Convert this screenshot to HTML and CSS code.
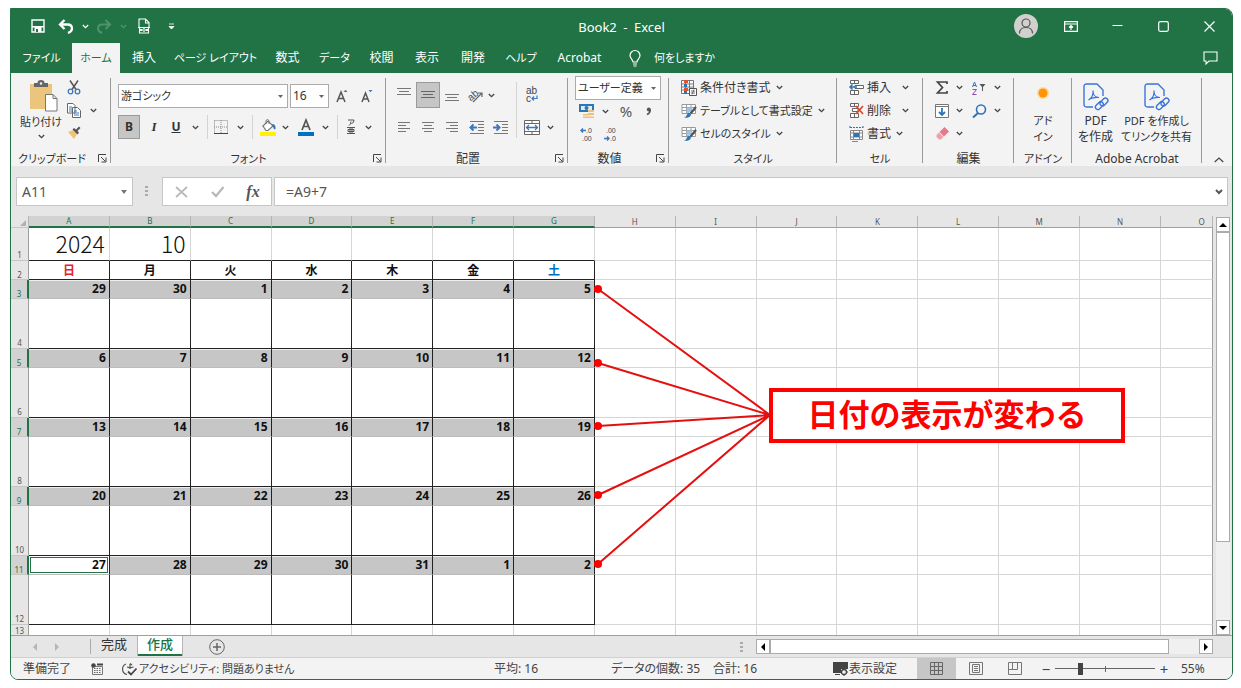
FILE: index.html
```html
<!DOCTYPE html>
<html lang="ja">
<head>
<meta charset="utf-8">
<title>Book2 - Excel</title>
<link rel="stylesheet" href="styles.css">
</head>
<body>
<svg class="defs" aria-hidden="true">
  <symbol id="chev" viewBox="0 0 7 5"><path d="M.8 1l2.7 2.7L6.2 1" fill="none" stroke="currentColor" stroke-width="1.3"/></symbol>
  <symbol id="launch" viewBox="0 0 9 9"><path d="M.5 8V.5H8M3 3l4.5 4.5M8 3.5V8H3.5" fill="none" stroke="#444"/></symbol>
  <symbol id="pdf" viewBox="0 0 26 28"><g fill="none" stroke="#3b74d8" stroke-width="1.4"><path d="M10 24H3.500Q1 24 1 21.500V3.500Q1 1 3.500 1H14L20 7V13"/><path d="M5.500 17c3.500-2 5-5 4.500-9.500M10 8c0 4.500 3 6.500 6 6.500M5.500 17c2-2 7-3 10.500-2.500" stroke-width="1.200"/><rect x="12" y="20.500" width="9" height="5" rx="2.500" transform="rotate(-45 16 23)"/><rect x="16.500" y="16.500" width="9" height="5" rx="2.500" transform="rotate(-45 21 19)"/></g></symbol>
  <symbol id="tblbrush" viewBox="0 0 16 16"><path d="M1 1.500h13.500v9H1zM1 4.500h13.500M1 7.500h13.500M5.500 1.500v9M10 1.500v9" fill="#fff" stroke="#999"/><path d="M5.500 4.500H12L8 10H5.500z" fill="#9dc3e6"/><path d="M15 4L9.500 10.500" stroke="#555" stroke-width="2.200"/><path d="M3 14.500c3 0 2-4 5-4.500 2 0 2.500 2 1 3.500-1.500 1.300-4 1.500-6 1z" fill="#2e75b6"/></symbol>
</svg>
<div class="window">
  <header class="titlebar">
    <div class="quick">
      <button aria-label="上書き保存"><svg width="14" height="14" viewBox="0 0 14 14"><path d="M1 1h12v12H1z" fill="none" stroke="#fff" stroke-width="1.400"/><path d="M1 7h12v1.500H1zM3.500 8.500h7V13h-7z" fill="#fff"/><path d="M5 10h2v3H5z" fill="#217346"/></svg></button>
      <button aria-label="元に戻す"><svg width="16" height="15" viewBox="0 0 16 15"><path d="M2 5.500h7.500q4.500 0 4.500 4 0 3-4 4.500M6.500 1L2 5.500 6.500 10" fill="none" stroke="#fff" stroke-width="2.300"/></svg></button>
      <button aria-label="元に戻す履歴"><svg width="7" height="5"><use href="#chev"/></svg></button>
      <button class="dim" aria-label="やり直し"><svg width="16" height="15" viewBox="0 0 16 15"><path d="M14 5.500H6.500q-4.500 0-4.500 4 0 3 4 4.500M9.500 1L14 5.500 9.500 10" fill="none" stroke="currentColor" stroke-width="2"/></svg></button>
      <button class="dim" aria-label="やり直し履歴"><svg width="7" height="5"><use href="#chev"/></svg></button>
      <button aria-label="印刷"><svg width="14" height="16" viewBox="0 0 14 16"><path d="M2 9V1h6.500L12 4.500V9M8.500 1v4H12M1 9.500h12M2.500 10v5h9v-5" fill="none" stroke="#fff" stroke-width="1.100"/><path d="M3 11h2v2H3zM9 11h2v2H9z" fill="#fff"/><circle cx="7" cy="12" r="1.300" fill="none" stroke="#fff"/></svg></button>
      <button aria-label="カスタマイズ"><svg width="5" height="7" viewBox="0 0 5 7"><path d="M0 1h5M0 3.500h5L2.500 6z" stroke="#fff" fill="#fff" stroke-width=".8"/></svg></button>
    </div>
    <h1 class="title">Book2&ensp;-&ensp;Excel</h1>
    <div class="winbtns">
      <button class="avatar" aria-label="アカウント"><svg width="24" height="24" viewBox="0 0 24 24"><circle cx="12" cy="12" r="12" fill="#d2d0ce"/><circle cx="12" cy="9" r="4" fill="none" stroke="#555" stroke-width="1.200"/><path d="M5.500 19.500q0-6 6.500-6t6.500 6" fill="none" stroke="#555" stroke-width="1.200"/></svg></button>
      <button aria-label="リボンの表示オプション"><svg width="14" height="11" viewBox="0 0 14 11"><path d="M.6.600h12.800v9.800H.6zM.6 3h12.800M7 9V4.500M5 6.500l2-2 2 2" fill="none" stroke="#fff" stroke-width="1.200"/></svg></button>
      <button aria-label="最小化"><svg width="11" height="11" viewBox="0 0 11 11"><path d="M.5 4.500h10" stroke="#fff" stroke-width="1.200"/></svg></button>
      <button aria-label="最大化"><svg width="11" height="11" viewBox="0 0 11 11"><rect x=".7" y=".7" width="9.600" height="9.600" rx="1.500" fill="none" stroke="#fff" stroke-width="1.200"/></svg></button>
      <button aria-label="閉じる"><svg width="11" height="11" viewBox="0 0 11 11"><path d="M.5.500l10 10M10.500.500l-10 10" stroke="#fff" stroke-width="1.200"/></svg></button>
    </div>
  </header>
  <nav class="tabs">
    <button class="kana">ファイル</button><button class="active kana">ホーム</button><button>挿入</button><button class="kana">ページ レイアウト</button><button>数式</button><button class="kana">データ</button><button>校閲</button><button>表示</button><button>開発</button><button class="kana">ヘルプ</button><button>Acrobat</button>
    <button class="tell kana"><svg width="12" height="17" viewBox="0 0 12 17"><path d="M4 12c0-2.500-3-3.500-3-6.500a5 5 0 0 1 10 0c0 3-3 4-3 6.500zM4 14h4M4.500 16h3" fill="none" stroke="#fff" stroke-width="1.200"/></svg>何をしますか</button>
    <button class="comment" aria-label="コメント"><svg width="15" height="14" viewBox="0 0 15 14"><path d="M1 1h13v9H6l-3 3v-3H1z" fill="none" stroke="#fff" stroke-width="1.100"/></svg></button>
  </nav>
  <section class="ribbon">
    <div class="group g-clip">
      <div class="body">
        <button class="big"><svg width="34" height="32" viewBox="-6 0 34 32"><path d="M0 4h22v25H0z" fill="#ecc57c"/><path d="M4 7V3h3.500a3.500 3 0 0 1 7 0H18v4z" fill="#666"/><circle cx="11" cy="3.500" r="1.200" fill="#f3f3f3"/><path d="M15.500 14.500H23l4 4V31H15.500zM23 14.500v4h4" fill="#fff" stroke="#777"/></svg><span class="kana">貼り付け</span><svg width="7" height="5"><use href="#chev"/></svg></button>
        <div class="clipcol">
          <button aria-label="切り取り"><svg width="14" height="15" viewBox="0 0 14 15"><path d="M3 .5l6 9M11 .5l-6 9" stroke="#555" stroke-width="1.500"/><circle cx="3.500" cy="11.500" r="2.300" fill="none" stroke="#3b78bd" stroke-width="1.300"/><circle cx="10.500" cy="11.500" r="2.300" fill="none" stroke="#3b78bd" stroke-width="1.300"/></svg></button><span></span>
          <button aria-label="コピー"><svg width="14" height="15" viewBox="0 0 14 15"><path d="M.5.500H6L8 2.500V10H.5zM5.500 4.500h5l3 3v7h-8z" fill="#fff" stroke="#666"/><path d="M2 4h3M2 6h3M2 8h3M7 8h3M7 10h5M7 12h5" stroke="#3b78bd"/></svg></button><button aria-label="コピーのオプション"><svg width="7" height="5"><use href="#chev"/></svg></button>
          <button aria-label="書式のコピー"><svg width="14" height="13" viewBox="0 0 14 13"><path d="M1 6l5-2 4 4-3 5z" fill="#ecc57c"/><path d="M5.500 3.500l5 5 1.500-2-1.500-1.500L13.500 2 12 .5 9 3.500 7 2z" fill="#555"/></svg></button><span></span>
        </div>
      </div>
      <footer class="kana">クリップボード<button class="launch" aria-label="クリップボードの設定"><svg width="9" height="9"><use href="#launch"/></svg></button></footer>
    </div>
    <div class="group g-font">
      <div class="body col">
        <div class="fontrow1">
          <select class="kana" aria-label="フォント"><option>游ゴシック</option></select>
          <select aria-label="フォント サイズ"><option>16</option></select>
          <button aria-label="拡大"><svg width="14" height="15" viewBox="0 0 14 15"><path d="M1 13L5 3l4 10M2.500 9.500h5" fill="none" stroke="#555" stroke-width="1.500"/><path d="M7.500 3L9.500.800 11.500 3z" fill="#3b78bd"/></svg></button>
          <button aria-label="縮小"><svg width="14" height="15" viewBox="0 0 14 15"><path d="M1 13l3.500-9L8 13M2.500 10h4" fill="none" stroke="#555" stroke-width="1.500"/><path d="M7.500 1h4l-2 2.200z" fill="#3b78bd"/></svg></button>
        </div>
        <div class="fontrow2">
          <button class="on bold">B</button><button class="ital">I</button><button class="under">U</button><button aria-label="下線"><svg width="7" height="5"><use href="#chev"/></svg></button><i class="sep"></i>
          <button aria-label="罫線"><svg width="14" height="14" viewBox="0 0 14 14"><path d="M.5.500h13v13M.5.500v13M7 0v14M0 7h14" stroke="#888" stroke-dasharray="1 1" fill="none"/><path d="M0 13.500h14" stroke="#444"/></svg></button><button aria-label="罫線の種類"><svg width="7" height="5"><use href="#chev"/></svg></button><i class="sep"></i>
          <button aria-label="塗りつぶし"><svg width="17" height="17" viewBox="0 0 17 17"><path d="M3 7l5-5 5 5-5 4.500H6z" fill="#fff" stroke="#777" stroke-width="1.200"/><path d="M6 5V1.500Q7.500-.5 9 1.500V5" fill="none" stroke="#777"/><path d="M12 5q4 0 3.500 5-1.500 1-2-1z" fill="#2e75b6"/><path d="M0 13h16v4H0z" fill="#fff200"/></svg></button><button aria-label="塗りつぶしの色"><svg width="7" height="5"><use href="#chev"/></svg></button>
          <button aria-label="フォントの色"><svg width="16" height="17" viewBox="0 0 16 17"><path d="M4 11L8 1l4 10M5.500 7.500h5" fill="none" stroke="#555" stroke-width="1.700"/><path d="M0 13h16v4H0z" fill="#0070c0"/></svg></button><button aria-label="色の選択"><svg width="7" height="5"><use href="#chev"/></svg></button><i class="sep"></i>
          <button aria-label="ふりがなの表示"><svg width="10" height="16" viewBox="0 0 10 16"><path d="M2 1h6q0 3-2.500 3.500M5 2.500Q5 5.500 3 6.500M1 8.500h8M1 14.500h8M4 8.500v6M6 8.500v6M2 10.500h6v2H2z" fill="none" stroke="#555"/></svg></button><button aria-label="ふりがな"><svg width="7" height="5"><use href="#chev"/></svg></button>
        </div>
      </div>
      <footer class="kana">フォント<button class="launch" aria-label="フォントの設定"><svg width="9" height="9"><use href="#launch"/></svg></button></footer>
    </div>
    <div class="group g-align">
      <div class="body aligngrid">
        <button aria-label="上揃え"><svg width="14" height="14"><path d="M0 .5h14M2 3.500h10M0 6.500h14" stroke="#777"/></svg></button>
        <button class="on" aria-label="上下中央揃え"><svg width="14" height="14"><path d="M0 3.500h14M2 6.500h10M0 9.500h14" stroke="#666"/></svg></button>
        <button aria-label="下揃え"><svg width="14" height="14"><path d="M0 6.500h14M2 9.500h10M0 12.500h14" stroke="#777"/></svg></button>
        <button aria-label="方向"><svg width="16" height="16" viewBox="0 0 16 16"><text x="0" y="11" font-size="10" fill="#444" transform="rotate(-40 6 9)">ab</text><path d="M5 15L14 6M10 6h4v4" fill="none" stroke="#666" stroke-width="1.200"/></svg></button>
        <button class="left" aria-label="方向の選択"><svg width="7" height="5"><use href="#chev"/></svg></button>
        <i class="sep"></i>
        <button aria-label="折り返し"><svg width="14" height="18" viewBox="0 0 14 18"><text x="1" y="8" font-size="10" fill="#444">ab</text><text x="1" y="16" font-size="10" fill="#444">c</text><path d="M12 9.500v3H7M9 10.500l-2 2 2 2" fill="none" stroke="#3b78bd" stroke-width="1.200"/></svg></button><span></span>
        <button aria-label="左揃え"><svg width="12" height="12"><path d="M0 1.500h12M0 4.500h8M0 7.500h12M0 10.500h8" stroke="#777"/></svg></button>
        <button aria-label="中央揃え"><svg width="12" height="12"><path d="M0 1.500h12M2 4.500h8M0 7.500h12M2 10.500h8" stroke="#777"/></svg></button>
        <button aria-label="右揃え"><svg width="12" height="12"><path d="M0 1.500h12M4 4.500h8M0 7.500h12M4 10.500h8" stroke="#777"/></svg></button>
        <button aria-label="インデント解除"><svg width="15" height="13" viewBox="0 0 15 13"><path d="M1 .5h14M9 3.500h6M9 6.500h6M9 9.500h6M1 12.500h14" stroke="#777"/><path d="M8 6.500H1M4.500 3.500l-3 3 3 3" fill="none" stroke="#3b78bd" stroke-width="2"/></svg></button>
        <button aria-label="インデント"><svg width="15" height="13" viewBox="0 0 15 13"><path d="M1 .5h14M9 3.500h6M9 6.500h6M9 9.500h6M1 12.500h14" stroke="#777"/><path d="M0 6.500h7M3.500 3.500l3 3-3 3" fill="none" stroke="#3b78bd" stroke-width="2"/></svg></button>
        <button aria-label="セルを結合して中央揃え"><svg width="16" height="15" viewBox="0 0 16 15"><path d="M.5.500h15v14H.5zM.5 3.500h15M.5 11.500h15M8 0v3.500M8 11.500V15" fill="#fff" stroke="#666"/><path d="M2 7.500h12M5 5L2.500 7.500 5 10M11 5l2.500 2.500L11 10" fill="none" stroke="#3b78bd" stroke-width="1.300"/></svg></button>
        <button aria-label="結合の種類"><svg width="7" height="5"><use href="#chev"/></svg></button>
      </div>
      <footer>配置<button class="launch" aria-label="配置の設定"><svg width="9" height="9"><use href="#launch"/></svg></button></footer>
    </div>
    <div class="group g-num">
      <div class="body col">
        <select class="kana" aria-label="表示形式"><option>ユーザー定義</option></select>
        <div class="numrow">
          <button aria-label="通貨"><svg width="16" height="16" viewBox="0 0 16 16"><path d="M0 1h15v8H0z" fill="#2e75b6"/><path d="M2 3h11v4H2z" fill="#dcebf8"/><circle cx="7.500" cy="5" r="2" fill="#2e75b6"/><path d="M9 7h6v2H9zM9 10h6v2H9zM4 11h6v1.500H4zM4 13.500h11V15H4z" fill="#f0c078"/></svg></button><button aria-label="通貨の種類"><svg width="7" height="5"><use href="#chev"/></svg></button><button class="pct">%</button><button aria-label="桁区切り"><svg width="6" height="9" viewBox="0 0 6 9"><path d="M1 7.500Q4.500 6 4 2.500" fill="none" stroke="#555" stroke-width="1.800"/><circle cx="2.800" cy="2.500" r="2" fill="#555"/></svg></button>
        </div>
        <div class="decrow">
          <button aria-label="小数点以下の桁数を増やす"><svg width="14" height="16" viewBox="0 0 14 16"><text x="6" y="7" font-size="7" fill="#444">.0</text><text x="2" y="15" font-size="7" fill="#444">.00</text><path d="M6 4.500H1M3 2.500l-2 2 2 2" fill="none" stroke="#3b78bd" stroke-width="1.400"/></svg></button>
          <button aria-label="小数点以下の桁数を減らす"><svg width="14" height="16" viewBox="0 0 14 16"><text x="2" y="7" font-size="7" fill="#444">.00</text><text x="6" y="15" font-size="7" fill="#444">.0</text><path d="M0 12.500h5M3 10.500l2 2-2 2" fill="none" stroke="#3b78bd" stroke-width="1.400"/></svg></button>
        </div>
      </div>
      <footer>数値<button class="launch" aria-label="数値の設定"><svg width="9" height="9"><use href="#launch"/></svg></button></footer>
    </div>
    <div class="group g-style">
      <div class="body col">
        <button class="item"><svg width="16" height="16" viewBox="0 0 16 16"><path d="M.5.500h12v13H.5zM.5 4h12M.5 7h12M.5 10h12M4.500.500v13M8.500.500v13" fill="#fff" stroke="#777"/><path d="M3 0h4v3H3zM3 8h4v3H3z" fill="#e0532f"/><path d="M3 4h3v3H3zM3 11h3v3H3z" fill="#2e75b6"/><path d="M8.500 8.500h7v7h-7z" fill="#fff" stroke="#555"/><path d="M10 11h4M10 13h4M13 9.500l-2 5" stroke="#555" stroke-width=".8"/></svg>条件付き書式<svg width="7" height="5"><use href="#chev"/></svg></button>
        <button class="item"><svg width="16" height="16"><use href="#tblbrush"/></svg><span class="kana">テーブルとして書式設定</span><svg width="7" height="5"><use href="#chev"/></svg></button>
        <button class="item"><svg width="16" height="16"><use href="#tblbrush"/></svg><span class="kana">セルのスタイル</span><svg width="7" height="5"><use href="#chev"/></svg></button>
      </div>
      <footer class="kana">スタイル</footer>
    </div>
    <div class="group g-cell">
      <div class="body col">
        <button class="item"><svg width="15" height="15" viewBox="0 0 15 15"><path d="M1.500.500h8v3h-8zM5.500.500v3M1.500 10.500h8v4h-8zM5.500 10.500v4M6 5.500h8.500v3H6z" fill="#fff" stroke="#666"/><path d="M8 7H1M3.500 4.500L1 7l2.500 2.500" fill="none" stroke="#2e75b6" stroke-width="1.500"/></svg><span>挿入</span><svg width="7" height="5"><use href="#chev"/></svg></button>
        <button class="item"><svg width="15" height="15" viewBox="0 0 15 15"><path d="M1.500.500h8v3h-8zM5.500.500v3M1.500 10.500h8v4h-8zM5.500 10.500v4M3.500 5.500H9v3H3.500z" fill="#fff" stroke="#666"/><path d="M7 3l7 8M14 3l-7 8" stroke="#d9482b" stroke-width="1.700"/></svg><span>削除</span><svg width="7" height="5"><use href="#chev"/></svg></button>
        <button class="item near"><svg width="15" height="16" viewBox="0 0 15 16"><path d="M1 1.500h13M1 0v3M14 0v3" stroke="#2e75b6" stroke-dasharray="2 1"/><path d="M1.500 4.500h12v9h-12zM1.500 7h12M1.500 11h12M4.500 4.500v9M10.500 4.500v9" fill="#fff" stroke="#888"/><path d="M5 7h5v4H5z" fill="#2e75b6"/><path d="M3 15.500h6" stroke="#888"/></svg><span>書式</span><svg width="7" height="5"><use href="#chev"/></svg></button>
      </div>
      <footer class="kana">セル</footer>
    </div>
    <div class="group g-edit">
      <div class="body editgrid">
        <button aria-label="オート SUM"><svg width="12" height="13" viewBox="0 0 12 13"><path d="M11 3V1H1.500L6.500 6.500 1.500 12H11v-2" fill="none" stroke="#444" stroke-width="1.700"/></svg></button><button aria-label="オート SUM の種類"><svg width="7" height="5"><use href="#chev"/></svg></button>
        <button aria-label="並べ替え"><svg width="14" height="14" viewBox="0 0 14 14"><path d="M.5 6L2.500 1l2 5M1.200 4.500h2.600" fill="none" stroke="#2e75b6"/><path d="M.5 8.500h4l-4 5h4" fill="none" stroke="#8a4fb0"/><path d="M7.500 3h6L11 6v4h-1V6z" fill="#555"/></svg></button><button aria-label="並べ替えの種類"><svg width="7" height="5"><use href="#chev"/></svg></button>
        <button aria-label="フィル"><svg width="14" height="14" viewBox="0 0 14 14"><path d="M.5.500h13v13H.5zM.5 2.500h13" fill="#fff" stroke="#777"/><path d="M7 4v7M4 8l3 3 3-3" fill="none" stroke="#2e75b6" stroke-width="1.800"/></svg></button><button aria-label="フィルの種類"><svg width="7" height="5"><use href="#chev"/></svg></button>
        <button aria-label="検索"><svg width="15" height="14" viewBox="0 0 15 14"><circle cx="9" cy="5.500" r="4.500" fill="none" stroke="#2e75b6" stroke-width="1.600"/><path d="M6 9l-5 4.500" stroke="#2e75b6" stroke-width="2"/></svg></button><button aria-label="検索の種類"><svg width="7" height="5"><use href="#chev"/></svg></button>
        <button aria-label="クリア"><svg width="13" height="13" viewBox="0 0 13 13"><path d="M8.500 0L13 4.500 8 9.500 3.500 5z" fill="#e8788a"/><path d="M3 5.500L7.500 10l-2.500 2.500H3L.5 10V8z" fill="#f0a0ac"/></svg></button><button aria-label="クリアの種類"><svg width="7" height="5"><use href="#chev"/></svg></button>
      </div>
      <footer>編集</footer>
    </div>
    <div class="group g-addin">
      <div class="body"><button class="big2 kana"><svg width="28" height="28"><circle cx="14" cy="10" r="6" fill="#ffd9a0"/><circle cx="14" cy="10" r="4.500" fill="#ff9408"/></svg><span>アド<br>イン</span></button></div>
      <footer class="kana">アドイン</footer>
    </div>
    <div class="group g-acro">
      <div class="body"><button class="big2"><svg width="26" height="28"><use href="#pdf"/></svg><span>PDF<br>を作成</span></button><button class="big2 kana"><svg width="26" height="28"><use href="#pdf"/></svg><span>PDF を作成し<br>てリンクを共有</span></button></div>
      <footer>Adobe Acrobat</footer>
    </div>
    <button class="collapse" aria-label="リボンを折りたたむ"><svg width="10" height="6" viewBox="0 0 10 6"><path d="M.7 5L5 1l4.300 4" fill="none" stroke="#444" stroke-width="1.200"/></svg></button>
  </section>
  <section class="formula">
    <div class="namebox"><input aria-label="名前ボックス" value="A11"><svg width="6" height="4"><path d="M0 0h6L3 4z" fill="#777"/></svg></div>
    <i class="dots"></i>
    <div class="fxbtns">
      <button aria-label="キャンセル"><svg width="13" height="12" viewBox="0 0 13 12"><path d="M1 1l11 10M12 1L1 11" stroke="#b8b8b8" stroke-width="1.700"/></svg></button>
      <button aria-label="入力"><svg width="13" height="11" viewBox="0 0 13 11"><path d="M1 6l4 4 7.500-9" fill="none" stroke="#b8b8b8" stroke-width="2.200"/></svg></button>
      <button class="fx">fx</button>
    </div>
    <div class="fbox"><input aria-label="数式バー" value="=A9+7"><svg width="8" height="6" viewBox="0 0 8 6"><path d="M1 1l3 3 3-3" fill="none" stroke="#555" stroke-width="2"/></svg></div>
  </section>
  <div class="sheetwrap">
    <div class="sheet">
      <table>
        <colgroup><col class="c-head"><col span="14"><col class="c-last"></colgroup>
        <thead><tr><th class="corner"><svg width="6" height="6"><path d="M6 0v6H0z" fill="#b0b0b0"/></svg></th><th class="s">A</th><th class="s">B</th><th class="s">C</th><th class="s">D</th><th class="s">E</th><th class="s">F</th><th class="s">G</th><th>H</th><th>I</th><th>J</th><th>K</th><th>L</th><th>M</th><th>N</th><th class="o">O</th></tr></thead>
        <tbody>
        <tr class="r-year"><th>1</th><td>2024</td><td>10</td><td></td><td></td><td></td><td></td><td></td><td></td><td></td><td></td><td></td><td></td><td></td><td></td><td></td></tr>
        <tr class="r-week"><th>2</th><td class="sun">日</td><td>月</td><td>火</td><td>水</td><td>木</td><td>金</td><td class="sat">土</td><td></td><td></td><td></td><td></td><td></td><td></td><td></td><td></td></tr>
        <tr class="r-date"><th>3</th><td>29</td><td>30</td><td>1</td><td>2</td><td>3</td><td>4</td><td>5</td><td></td><td></td><td></td><td></td><td></td><td></td><td></td><td></td></tr>
        <tr class="r-memo"><th>4</th><td></td><td></td><td></td><td></td><td></td><td></td><td></td><td></td><td></td><td></td><td></td><td></td><td></td><td></td><td></td></tr>
        <tr class="r-date"><th>5</th><td>6</td><td>7</td><td>8</td><td>9</td><td>10</td><td>11</td><td>12</td><td></td><td></td><td></td><td></td><td></td><td></td><td></td><td></td></tr>
        <tr class="r-memo"><th>6</th><td></td><td></td><td></td><td></td><td></td><td></td><td></td><td></td><td></td><td></td><td></td><td></td><td></td><td></td><td></td></tr>
        <tr class="r-date"><th>7</th><td>13</td><td>14</td><td>15</td><td>16</td><td>17</td><td>18</td><td>19</td><td></td><td></td><td></td><td></td><td></td><td></td><td></td><td></td></tr>
        <tr class="r-memo"><th>8</th><td></td><td></td><td></td><td></td><td></td><td></td><td></td><td></td><td></td><td></td><td></td><td></td><td></td><td></td><td></td></tr>
        <tr class="r-date"><th>9</th><td>20</td><td>21</td><td>22</td><td>23</td><td>24</td><td>25</td><td>26</td><td></td><td></td><td></td><td></td><td></td><td></td><td></td><td></td></tr>
        <tr class="r-memo"><th>10</th><td></td><td></td><td></td><td></td><td></td><td></td><td></td><td></td><td></td><td></td><td></td><td></td><td></td><td></td><td></td></tr>
        <tr class="r-date"><th>11</th><td class="current">27</td><td>28</td><td>29</td><td>30</td><td>31</td><td>1</td><td>2</td><td></td><td></td><td></td><td></td><td></td><td></td><td></td><td></td></tr>
        <tr class="r-memo"><th>12</th><td></td><td></td><td></td><td></td><td></td><td></td><td></td><td></td><td></td><td></td><td></td><td></td><td></td><td></td><td></td></tr>
        <tr class="r-tail"><th>13</th><td></td><td></td><td></td><td></td><td></td><td></td><td></td><td></td><td></td><td></td><td></td><td></td><td></td><td></td><td></td></tr>
        </tbody>
      </table>
      <svg class="lines"><g stroke="#e60f0f" stroke-width="2"><path d="M587 73L759 199M587 147L759 199M587 210L759 199M587 279L759 199M587 348L759 199"/></g><g fill="#f00"><circle cx="587" cy="73" r="4"/><circle cx="587" cy="147" r="4"/><circle cx="587" cy="210" r="4"/><circle cx="587" cy="279" r="4"/><circle cx="587" cy="348" r="4"/></g></svg>
      <div class="callout">日付の表示が変わる</div>
    </div>
    <div class="vscroll">
      <button aria-label="上へ"><svg width="8" height="4"><path d="M0 4h8L4 0z"/></svg></button>
      <div class="track"><div class="thumb"></div></div>
      <button aria-label="下へ"><svg width="8" height="4"><path d="M0 0h8L4 4z"/></svg></button>
    </div>
  </div>
  <div class="sheetbar">
    <button class="nav" aria-label="前のシート"><svg width="4" height="8"><path d="M4 0v8L0 4z" fill="#b5b5b5"/></svg></button>
    <button class="nav" aria-label="次のシート"><svg width="4" height="8"><path d="M0 0v8l4-4z" fill="#b5b5b5"/></svg></button>
    <i class="bar"></i>
    <button class="sh">完成</button><button class="sh cur">作成</button>
    <button class="plus" aria-label="新しいシート"><svg width="16" height="16"><circle cx="8" cy="8" r="7.300" fill="none" stroke="#666"/><path d="M8 4v8M4 8h8" stroke="#666" stroke-width="1.500"/></svg></button>
    <i class="dots"></i>
    <div class="hscroll">
      <button aria-label="左へ"><svg width="4" height="8"><path d="M4 0v8L0 4z"/></svg></button>
      <div class="track"><div class="thumb"></div></div>
      <button aria-label="右へ"><svg width="4" height="8"><path d="M0 0v8l4-4z"/></svg></button>
    </div>
  </div>
  <footer class="status">
    <span class="ready">準備完了</span>
    <button class="rec" aria-label="マクロの記録"><svg width="12" height="12" viewBox="0 0 12 12"><path d="M1.500 3.500h10v8h-10z" fill="none" stroke="#777"/><path d="M6 1.500h6" stroke="#444" stroke-width="2"/><path d="M3 5.500h7M3 7.500h7M3 9.500h7" stroke="#666" stroke-dasharray="1.500 1"/><circle cx="2.500" cy="2.500" r="2.300" fill="#444"/></svg></button>
    <button class="acc kana"><svg width="16" height="14" viewBox="0 0 16 14"><path d="M6 12.500A5.500 5.500 0 0 1 5 2M9 1.500l2 1.500M6 5l3 .8L12.500 5M9 2v5" fill="none" stroke="#555" stroke-width="1.200"/><path d="M7 9.500l3 3 5.500-6" fill="none" stroke="#444" stroke-width="1.800"/></svg>アクセシビリティ: 問題ありません</button>
    <span class="avg">平均: 16</span><span class="cnt">データの個数: 35</span><span class="sum">合計: 16</span>
    <button class="disp"><svg width="16" height="14" viewBox="0 0 16 14"><path d="M0 0h15v7H8v4H0zM2 12h5v1H2z" fill="#444"/><circle cx="11" cy="10" r="2.500" fill="#f3f3f3" stroke="#444" stroke-width="1.300"/><path d="M11 6v2M11 12v2M7 10h2M13 10h2" stroke="#444"/></svg>表示設定</button>
    <div class="views">
      <button class="on" aria-label="標準"><svg width="13" height="13"><path d="M.5.500h12v12H.5zM4.500 0v13M8.500 0v13M0 4.500h13M0 8.500h13" fill="none" stroke="#666"/></svg></button>
      <button aria-label="ページ レイアウト"><svg width="14" height="13"><path d="M.5.500h13v12H.5zM3.500 2.500h7v8h-7zM5 4.500h4M5 6.500h4M5 8.500h4" fill="none" stroke="#777"/></svg></button>
      <button aria-label="改ページ プレビュー"><svg width="14" height="13"><path d="M.5.500h13v12H.5zM4.500.500v7M9.500.500v7M.5 7.500h9" fill="none" stroke="#777"/></svg></button>
    </div>
    <div class="zoom"><button aria-label="縮小">−</button><input type="range" aria-label="ズーム" min="0" max="100" value="25"><button aria-label="拡大">+</button></div>
    <span class="pc">55%</span>
  </footer>
</div>
</body>
</html>
```
FILE: styles.css
```css
* { box-sizing: border-box; }
body { margin: 0; background: #fff; color: #333; font: 12px/16px "Noto Sans", "Noto Sans CJK JP", sans-serif; font-feature-settings: "palt"; }
button { display: flex; align-items: center; justify-content: center; margin: 0; padding: 0; border: 0; background: none; color: inherit; font: inherit; font-feature-settings: inherit; white-space: nowrap; }
svg { display: block; flex: none; color: #444; overflow: visible; }
svg text { font-family: "Liberation Sans", sans-serif; }
.defs { position: absolute; width: 0; height: 0; }
.kana.kana { font-size: 11px; }
.window { margin: 8px 8px 8px 10px; border: 1px solid #217346; border-radius: 0 8px 8px 8px; overflow: hidden; background: #e6e6e6; }

.titlebar { display: grid; grid-template-columns: 1fr auto 1fr; align-items: center; height: 34px; background: #217346; color: #fff; }
.titlebar svg { color: #fff; }
.quick { display: grid; grid-template-columns: 24px 32px 6px 32px 6px 36px 18px; padding-left: 15px; }
.quick .dim svg { color: #4f9270; }
.title { margin: 0; font-size: 13px; font-weight: 400; line-height: 16px; padding-top: 2px; }
.winbtns { display: grid; grid-template-columns: 44px 46px 46px 46px 46px; justify-content: end; align-items: center; }

.tabs { display: grid; grid-template-columns: 61px 48px 48px 95px 49px 45px 49px 42px 50px 46px 71px 114px 1fr; height: 30px; background: #217346; color: #fff; }
.tabs .active { background: #f3f3f3; color: #217346; }
.tabs svg { color: #fff; }
.tell { gap: 13px; }
.comment { justify-self: end; width: 44px; }

.ribbon { display: flex; height: 93px; background: #f3f3f3; }
.group { display: flex; flex-direction: column; flex: none; position: relative; padding-top: 3px; }
.group::after { content: ""; position: absolute; right: 0; top: 5px; bottom: 3px; width: 1px; background: #9a9a9a; }
.group .body { display: flex; flex: 1; }
.group .col { flex-direction: column; }
.group > footer { position: relative; height: 16px; line-height: 17px; text-align: center; }
.launch { position: absolute; right: 4px; top: 4px; }
.g-clip { width: 100px; } .g-font { width: 275px; } .g-align { width: 182px; } .g-num { width: 101px; } .g-style { width: 168px; }
.g-cell { width: 86px; } .g-edit { width: 91px; } .g-addin { width: 58px; } .g-acro { width: 130px; }
.g-clip > footer, .g-num > footer, .g-align > footer { padding-right: 18px; }
.sep { display: block; width: 1px; height: 24px; background: #d4d4d4; justify-self: center; }
.on { background: #c6c6c6; box-shadow: inset 0 0 0 1px #9a9a9a; }
select { appearance: none; height: 24px; margin: 0; padding: 0 2px; border: 1px solid #ababab; border-radius: 0; color: #333; font: inherit; font-feature-settings: "palt"; background: #fff url("data:image/svg+xml,%3Csvg xmlns='http://www.w3.org/2000/svg' width='5' height='3'%3E%3Cpath d='M0 0h5L2.500 3z' fill='%23666'/%3E%3C/svg%3E") no-repeat right 4px center; }

.g-clip .body { padding-left: 9px; }
.big { flex-direction: column; width: 42px; justify-content: flex-start; padding-top: 4px; }
.big span { margin: 2px 0 4px; }
.clipcol { display: grid; grid-template-columns: 24px 14px; grid-template-rows: 23px 22px 23px; }

.g-font .body { padding: 8px 7px 0; gap: 7px; }
.fontrow1 { display: grid; grid-template-columns: 170px 39px 24px 22px; column-gap: 2px; }
.fontrow2 { display: grid; grid-template-columns: 22px 28px 16px 22px 2px 26px 12px 12px 20px 14px 28px 10px 14px 14px 20px; height: 24px; }
.bold { font-weight: 700; }
.ital { font: italic 700 13px/16px "Liberation Serif", serif; }
.under { font-weight: 700; text-decoration: underline; }

.aligngrid.aligngrid { display: grid; grid-template-columns: 24px 24px 24px 24px 24px 8px 24px 12px; grid-template-rows: 26px 26px; row-gap: 6px; padding: 6px; }
.aligngrid .left { justify-content: flex-start; }
.aligngrid .sep { grid-row: 1 / 3; grid-column: 6; height: 56px; }

.g-num .body { padding-left: 7px; }
.g-num select { width: 86px; }
.numrow { display: grid; grid-template-columns: 24px 12px 30px 16px; height: 22px; }
.pct { font-size: 15px; color: #555; }
.decrow { display: grid; grid-template-columns: 24px 24px; height: 24px; }

.item { justify-content: flex-start; gap: 3px; height: 23px; }
.item > svg:last-child { margin-left: 2px; }
.g-style .body { padding-left: 12px; }
.g-cell .body { padding-left: 12px; }
.g-cell .item > svg:last-child { margin-left: 8px; }
.g-cell .near > svg:last-child { margin-left: 2px; }
.editgrid.editgrid { display: grid; grid-template-columns: 22px 12px 28px 8px; grid-template-rows: 23px 23px 23px; padding-left: 8px; }

.big2 { flex-direction: column; justify-content: flex-start; padding-top: 7px; line-height: 16px; text-align: center; }
.big2 span { margin-top: 2px; }
.g-addin .body, .g-acro .body { justify-content: center; }
.g-acro .body { gap: 8px; padding-right: 4px; }
.collapse { margin: auto 8px 3px auto; }

.formula { display: flex; height: 50px; padding: 11px 4px 10px 5px; }
.namebox, .fxbtns, .fbox { display: flex; align-items: center; border: 1px solid #c6c6c6; background: #fff; }
.formula input { flex: 1; min-width: 0; height: 26px; padding: 0; border: 0; background: none; color: #555; font: 14px/20px "Noto Sans", sans-serif; }
.namebox { width: 117px; padding: 0 5px; }
.fxbtns { width: 110px; }
.fxbtns button { width: 36px; height: 26px; }
.fx.fx { font: italic 700 16px/20px "Liberation Serif", serif; color: #555; }
.fbox { flex: 1; margin-left: 2px; padding: 0 4px 0 11px; }
.dots { width: 3px; height: 11px; background: repeating-linear-gradient(#aaa 0 2px, transparent 2px 4px); }
.formula .dots { margin: 9px 14px 0 12px; }

.sheetwrap { display: flex; border-bottom: 1px solid #9f9f9f; }
.sheet { position: relative; flex: 1; min-width: 0; background: #fff; }
table { width: 100%; table-layout: fixed; border-spacing: 0; font-feature-settings: normal; }
.c-head { width: 18px; } .c-last { width: 52px; }
th, td { padding: 0; border: 0 solid #d6d6d6; border-width: 0 1px 1px 0; overflow: hidden; }
th { background: #e6e6e6; color: #555; font-size: 8px; font-weight: 400; line-height: 9px; }
thead th { height: 12px; border-color: #b5b5b5; border-bottom-color: #9f9f9f; }
thead .s { background: #d2d2d2; color: #217346; border-bottom: 2px solid #217346; line-height: 8px; }
thead .corner { border-bottom-color: #c6c6c6; }
thead .o { padding-left: 30px; }
.corner svg { margin: 2px 2px 0 auto; }
tbody th { vertical-align: bottom; border-right-color: #9f9f9f; border-bottom-color: #c6c6c6; }
.r-year th, .r-memo th { padding-bottom: 1px; }
td:last-child { border-right-color: #9f9f9f; }
.r-year td { height: 33px; padding: 0 4px 3px 0; text-align: right; color: #111; font: 300 23px/28px "Noto Sans CJK JP", sans-serif; }
.r-week td { height: 19px; text-align: center; color: #111; font-weight: 700; line-height: 17px; }
.r-week .sun { color: #e8202a; } .r-week .sat { color: #0070c0; }
.r-date td { height: 19px; padding-right: 3px; text-align: right; color: #111; font: 700 12px/18px "Noto Sans", sans-serif; }
.r-memo td { height: 50px; }
.r-tail td, .r-tail th { height: 10px; border-bottom: 0; }
.r-date th { background: #d2d2d2; color: #217346; border-right: 2px solid #217346; }
.r-date td:nth-child(-n+8) { background: #c6c6c6; box-shadow: inset 0 1px #eee; border-right-color: #222; border-bottom-color: #bbb; }
.r-week td:nth-child(-n+8), .r-memo td:nth-child(-n+8) { border-color: #222; }
.r-year td:nth-child(-n+8) { border-bottom-color: #222; }
.r-date .current.current { background: #fff; box-shadow: inset 0 0 0 1px #fff, inset 0 0 0 2px #217346; }
.lines { position: absolute; left: 0; top: 0; width: 100%; height: 100%; }
.callout { position: absolute; left: 758px; top: 172px; width: 356px; height: 55px; border: 4px solid #f00; background: #fff; color: #f00; text-align: center; font: 700 31px/42px "Noto Sans CJK JP", sans-serif; font-feature-settings: normal; }

.vscroll { display: flex; flex-direction: column; width: 19px; padding: 1px 2px 0 3px; }
.vscroll button, .hscroll button { width: 14px; height: 15px; border: 1px solid #ababab; background: #fff; }
.track { flex: 1; background: #f0f0f0; }
.thumb { border: 1px solid #ababab; background: #fff; }
.vscroll .thumb { width: 14px; height: 80%; }

.sheetbar { display: flex; height: 22px; font-size: 13px; border-bottom: 1px solid #d0d0d0; }
.nav { width: 22px; }
.nav:first-child { margin-left: 13px; }
.bar { width: 1px; height: 15px; margin: 3px 0 0 22px; background: #ababab; }
.sh { width: 46px; height: 20px; padding-bottom: 4px; }
.sh.cur { background: #fff; color: #217346; font-weight: 500; border: 1px solid #b5b5b5; border-width: 0 1px; box-shadow: inset 0 -2px #217346; }
.plus { margin-left: 26px; }
.sheetbar .dots { margin: 6px 13px 0 auto; }
.hscroll { display: flex; align-items: center; flex: 0 0 457px; margin-right: 19px; }
.hscroll .track { height: 15px; }
.hscroll .thumb { width: 93%; height: 15px; }

.status { display: flex; align-items: center; height: 21px; background: #f3f3f3; color: #444; white-space: nowrap; }
.status > * { flex: none; }
.ready { width: 80px; padding-left: 12px; }
.rec { margin-right: 18px; }
.acc { width: 373px; gap: 2px; justify-content: flex-start; }
.avg { width: 117px; } .cnt { width: 102px; } .sum { width: 120px; }
.disp { width: 84px; justify-content: flex-start; }
.views { display: flex; height: 21px; }
.views button { width: 39px; }
.views .on { box-shadow: none; }
.zoom { display: flex; align-items: center; margin-left: 5px; }
.zoom button { width: 14px; font-size: 15px; }
.zoom input { appearance: none; width: 104px; height: 12px; margin: 0; background: linear-gradient(#666, #666) center / 1px 6px no-repeat, linear-gradient(#666, #666) center / 100px 1px no-repeat; }
.zoom input::-webkit-slider-thumb { appearance: none; width: 5px; height: 12px; background: #444; }
.pc { padding-left: 10px; }
```
